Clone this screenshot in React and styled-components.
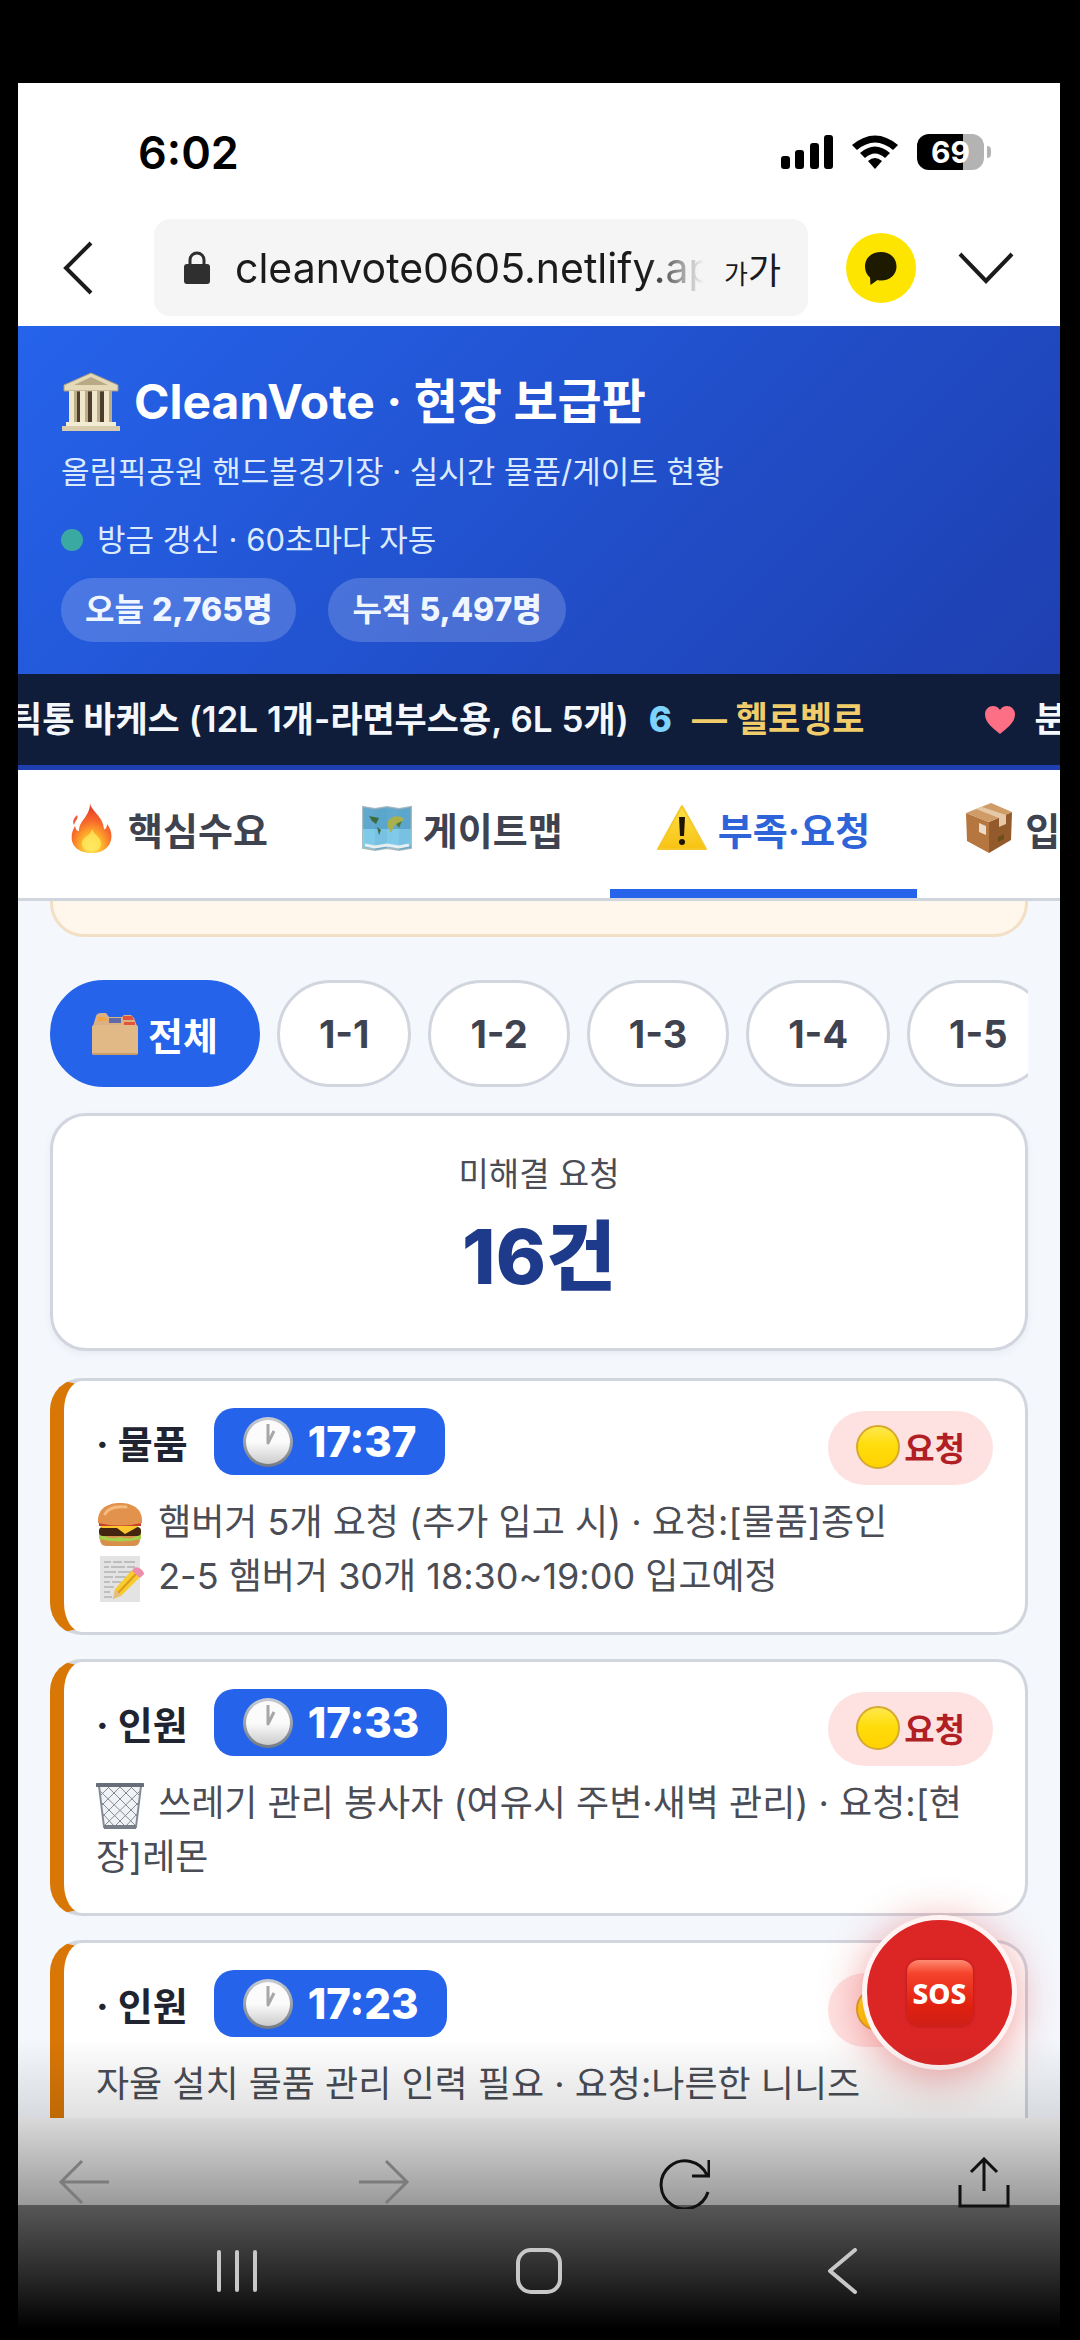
// Imports
import styled, { createGlobalStyle } from "styled-components";

const colors = {
  primary: "#2563eb",
  primaryDark: "#1e3fb0",
  navy: "#0f1d3a",
  border: "#d1d5de",
  text: "#3f4350",
  page: "#f4f7fc",
};

const GlobalStyle = createGlobalStyle`
  * {
    box-sizing: border-box;
  }
  body {
    margin: 0;
    background: #000;
    font-family: "Inter", "Noto Sans CJK KR", sans-serif;
  }
  button {
    display: flex;
    align-items: center;
    justify-content: center;
    flex-shrink: 0;
    margin: 0;
    padding: 0;
    border: none;
    background: none;
    color: inherit;
    font-family: inherit;
    cursor: pointer;
  }
  svg {
    display: block;
    flex-shrink: 0;
  }
`;

const tabs = [
  { label: "핵심수요", icon: <FireIcon /> },
  { label: "게이트맵", icon: <MapIcon /> },
  { label: "부족·요청", icon: <WarningIcon />, active: true },
  { label: "입고", icon: <BoxIcon /> },
];

const gates = ["1-1", "1-2", "1-3", "1-4", "1-5"];

const requests = [
  {
    type: "물품",
    time: "17:37",
    lines: [
      { icon: <BurgerIcon />, text: "햄버거 5개 요청 (추가 입고 시) · 요청:[물품]종인" },
      { icon: <MemoIcon />, text: "2-5 햄버거 30개 18:30~19:00 입고예정" },
    ],
  },
  {
    type: "인원",
    time: "17:33",
    lines: [
      {
        icon: <TrashIcon />,
        text: "쓰레기 관리 봉사자 (여유시 주변·새벽 관리) · 요청:[현장]레몬",
      },
    ],
  },
  {
    type: "인원",
    time: "17:23",
    lines: [{ text: "자율 설치 물품 관리 인력 필요 · 요청:나른한 니니즈" }],
  },
];

export default function App() {
  return (
    <Screen>
      <GlobalStyle />
      <StatusBar />
      <BrowserBar />
      <Header />
      <Ticker />
      <Tabs>
        {tabs.map((tab) => (
          <Tab key={tab.label} $active={tab.active}>
            {tab.icon}
            {tab.label}
          </Tab>
        ))}
      </Tabs>
      <Feed>
        <Notice />
        <Chips>
          <Chip $active>
            <FolderIcon />
            전체
          </Chip>
          {gates.map((gate) => (
            <Chip key={gate}>{gate}</Chip>
          ))}
        </Chips>
        <Summary>
          <SummaryLabel>미해결 요청</SummaryLabel>
          <SummaryCount>16건</SummaryCount>
        </Summary>
        <RequestList>
          {requests.map((request) => (
            <RequestCard key={request.time} request={request} />
          ))}
        </RequestList>
        <SosButton aria-label="SOS">
          <SosTile>SOS</SosTile>
        </SosButton>
      </Feed>
      <BrowserToolbar />
      <Shade />
      <SystemNav />
    </Screen>
  );
}

function StatusBar() {
  return (
    <StatusRow>
      <Clock>6:02</Clock>
      <StatusIcons>
        <svg width="52" height="34" viewBox="0 0 52 34">
          <rect x="0" y="21" width="9" height="13" rx="3" />
          <rect x="14" y="15" width="9" height="19" rx="3" />
          <rect x="29" y="8" width="9" height="26" rx="3" />
          <rect x="43" y="0" width="9" height="34" rx="3" />
        </svg>
        <svg width="46" height="34" viewBox="0 0 46 34">
          <path d="M0 10Q23-9 46 10L41 15Q23 0 5 15Z" />
          <path d="M8 18Q23 5 38 18L33 23Q23 14 13 23Z" />
          <path d="M16 26Q23 20 30 26L23 34Z" />
        </svg>
        <Battery>
          <BatteryBody>69</BatteryBody>
          <BatteryTip />
        </Battery>
      </StatusIcons>
    </StatusRow>
  );
}

function BrowserBar() {
  return (
    <BrowserRow>
      <button aria-label="뒤로">
        <svg width="32" height="54" viewBox="0 0 32 54" fill="none" stroke="#1b1b1b" strokeWidth="4">
          <path d="M29 2L4 27L29 52" />
        </svg>
      </button>
      <AddressBox>
        <svg width="26" height="34" viewBox="0 0 26 34">
          <path d="M6 15V9A7 7 0 0 1 20 9V15" fill="none" stroke="#2f2f2f" strokeWidth="3" />
          <rect y="13" width="26" height="20" rx="3" fill="#2f2f2f" />
        </svg>
        <AddressInput aria-label="주소" readOnly value="cleanvote0605.netlify.app" />
        <FontButton aria-label="글자 크기">
          <small>가</small>가
        </FontButton>
      </AddressBox>
      <TalkButton aria-label="카카오톡">
        <svg width="34" height="34" viewBox="0 0 34 34">
          <path
            d="M17 1C7.500 1 1 7 1 15.500C1 20.500 3 24 6 26.500L6.500 34L13.500 29Q15 29.500 17 29.500C26 29.500 32.500 23.500 32.500 15.500C32.500 7 26 1 17 1Z"
            fill="#1e1a00"
          />
        </svg>
      </TalkButton>
      <button aria-label="닫기">
        <svg width="56" height="34" viewBox="0 0 56 34" fill="none" stroke="#1b1b1b" strokeWidth="4">
          <path d="M2 3L28 30L54 3" />
        </svg>
      </button>
    </BrowserRow>
  );
}

function Header() {
  return (
    <Hero>
      <Title>
        <TempleIcon />
        CleanVote · 현장 보급판
      </Title>
      <Subtitle>올림픽공원 핸드볼경기장 · 실시간 물품/게이트 현황</Subtitle>
      <Updated>방금 갱신 · 60초마다 자동</Updated>
      <Counters>
        <Counter>
          오늘 <b>2,765명</b>
        </Counter>
        <Counter>
          누적 <b>5,497명</b>
        </Counter>
      </Counters>
    </Hero>
  );
}

function Ticker() {
  return (
    <TickerBar>
      <TickerTrack>
        <TickerItem>
          틱통 바케스 (12L 1개-라면부스용, 6L 5개) <TickerCount>6</TickerCount>
          <TickerName>— 헬로벵로</TickerName>
        </TickerItem>
        <TickerItem>
          <svg width="30" height="28" viewBox="0 0 30 28">
            <path
              d="M15 28C9 23 0 17 0 8.500C0 3 4 0 8 0C11 0 13.500 1.500 15 4C16.500 1.500 19 0 22 0C26 0 30 3 30 8.500C30 17 21 23 15 28Z"
              fill="#fd6f85"
            />
          </svg>
          분유
        </TickerItem>
      </TickerTrack>
    </TickerBar>
  );
}

function RequestCard({ request }) {
  return (
    <Card>
      <CardHead>
        <CardTitle>
          · {request.type}
          <TimeBadge>
            <ClockIcon />
            {request.time}
          </TimeBadge>
        </CardTitle>
        <StatusBadge>
          <YellowCircle />
          요청
        </StatusBadge>
      </CardHead>
      {request.lines.map((line) => (
        <CardLine key={line.text}>
          {line.icon}
          {line.icon && " "}
          {line.text}
        </CardLine>
      ))}
    </Card>
  );
}

function BrowserToolbar() {
  return (
    <Toolbar>
      <ToolButton aria-label="이전 페이지" $muted>
        <svg width="52" height="52" viewBox="0 0 52 52">
          <path d="M51 25H3M24 4L3 25L24 46" />
        </svg>
      </ToolButton>
      <ToolButton aria-label="다음 페이지" $muted>
        <svg width="52" height="52" viewBox="0 0 52 52">
          <path d="M1 25H49M28 4L49 25L28 46" />
        </svg>
      </ToolButton>
      <ToolButton aria-label="새로고침">
        <svg width="52" height="52" viewBox="0 0 52 52">
          <path d="M50 35A24 24 0 1 1 49 18M51 3V19H34" />
        </svg>
      </ToolButton>
      <ToolButton aria-label="공유">
        <svg width="52" height="52" viewBox="0 0 52 52">
          <path d="M2 28V49H50V28M26 34V2M13 15L26 2L39 15" />
        </svg>
      </ToolButton>
    </Toolbar>
  );
}

function SystemNav() {
  return (
    <NavBar>
      <NavButton aria-label="최근 앱">
        <svg width="46" height="46" viewBox="0 0 46 46">
          <path d="M5 4V42M23 4V42M41 4V42" />
        </svg>
      </NavButton>
      <NavButton aria-label="홈">
        <svg width="46" height="46" viewBox="0 0 46 46">
          <rect x="2" y="2" width="42" height="42" rx="13" />
        </svg>
      </NavButton>
      <NavButton aria-label="시스템 뒤로">
        <svg width="46" height="46" viewBox="0 0 46 46">
          <path d="M37 2L12 23L37 44" />
        </svg>
      </NavButton>
    </NavBar>
  );
}

/**
 * Emoji drawings
 */
function TempleIcon() {
  return (
    <svg width="60" height="60" viewBox="0 0 60 60">
      <rect x="10" y="18" width="40" height="33" fill="#4c3d2c" />
      <path d="M3 13L30 1L57 13V19H3Z" fill="#e4d9b8" stroke="#a89b7e" strokeWidth="1" />
      <path d="M13 13L30 5L47 13Z" fill="#b9aa85" />
      {[8, 19, 31, 43].map((x) => (
        <g key={x}>
          <rect x={x} y="19" width="8" height="32" fill="#f1e8cc" />
          <rect x={x + 5} y="19" width="3" height="32" fill="#bdae8b" />
        </g>
      ))}
      <rect x="5" y="50" width="50" height="4" fill="#f3ecd5" />
      <rect x="1" y="54" width="58" height="5" fill="#d8ccad" />
    </svg>
  );
}

function FireIcon() {
  return (
    <svg width="50" height="50" viewBox="0 0 50 50">
      <defs>
        <radialGradient id="fire" cx="50%" cy="88%" r="75%">
          <stop offset="0" stopColor="#fff26b" />
          <stop offset="0.350" stopColor="#fdb52a" />
          <stop offset="0.700" stopColor="#f8692b" />
          <stop offset="1" stopColor="#e8442a" />
        </radialGradient>
      </defs>
      <path
        d="M23 0C24 8 36 13 37 26C38 27 40 25 40 21C47 29 46 43 35 48C29 51 18 51 12 47C3 42 3 31 8 23C9 27 10 28 12 28C12 17 23 14 23 0Z"
        fill="url(#fire)"
      />
      <path d="M10 12C12 15 8 18 7 22C5 18 7 15 10 12Z" fill="#ef5a32" />
      <path d="M25 26C27 32 34 34 34 41C34 46 29 48 24 48C18 48 14 44 15 39C16 34 24 33 25 26Z" fill="#ffe75c" opacity="0.8" />
    </svg>
  );
}

function MapIcon() {
  return (
    <svg width="50" height="50" viewBox="0 0 50 50">
      <path d="M1 4L13 6L25 4L37 6L49 4V45L37 47L25 45L13 47L1 45Z" fill="#6db9dd" stroke="#a9bcc0" strokeWidth="2" />
      <path d="M1 4L13 6V26H1ZM25 4L37 6V26H25Z" fill="#5a9dc4" opacity="0.6" />
      <path d="M13 6L25 4V45L13 47ZM37 6L49 4V45L37 47Z" fill="#4a94bd" opacity="0.5" />
      <path d="M1 26H49V43L37 45L25 43L13 45L1 43Z" fill="#8cd4f1" opacity="0.6" />
      <path d="M7 13L17 15L14 21L10 18ZM15 24L19 27L17 32Z" fill="#3d6b3f" />
      <path d="M26 18C30 12 38 12 42 16C40 20 36 20 32 23L29 30L26 24Z" fill="#a9b04d" />
      <path d="M34 21L40 18L37 25Z" fill="#4f7a3f" />
      <path d="M3 42L13 44L25 42L37 44L47 42" fill="none" stroke="#e6eef0" strokeWidth="3" />
    </svg>
  );
}

function WarningIcon() {
  return (
    <svg width="50" height="50" viewBox="0 0 50 50">
      <defs>
        <linearGradient id="warning" x1="0" y1="0" x2="0" y2="1">
          <stop offset="0" stopColor="#fde047" />
          <stop offset="1" stopColor="#f7c313" />
        </linearGradient>
      </defs>
      <path d="M25 3L49 46H1Z" fill="url(#warning)" stroke="#f5c92c" strokeWidth="2" strokeLinejoin="round" />
      <path d="M22 14H28L27 33H23Z" fill="#1c1600" />
      <circle cx="25" cy="39" r="3" fill="#1c1600" />
    </svg>
  );
}

function BoxIcon() {
  return (
    <svg width="50" height="50" viewBox="0 0 50 50">
      <path d="M2 10L25 19V50L3 38Z" fill="#b5763f" />
      <path d="M48 9L25 19V50L47 37Z" fill="#935a2c" />
      <path d="M2 10L27 0L48 9L25 19Z" fill="#cf9b67" />
      <path d="M12 6L18 4L42 12V21L35 24V15Z" fill="#e5c9a6" />
      <path d="M15 20L22 23V32L15 29Z" fill="#eadccb" />
      <path d="M34 34L40 31V36L34 39Z" fill="#6d4f1a" />
    </svg>
  );
}

function FolderIcon() {
  return (
    <svg width="46" height="44" viewBox="0 0 46 44">
      <path d="M4 4Q5 1 9 1H14L17 5H30L32 3H39L42 6L45 14H1Z" fill="#d9b184" />
      <path d="M6 5H13L16 9H6Z" fill="#f1a545" />
      <path d="M17 6H29V11H17Z" fill="#5f6aa8" />
      <path d="M31 4H40L42 8H31ZM32 10H43V14H32Z" fill="#e2553b" />
      <rect x="0" y="13" width="46" height="30" rx="2" fill="#e1b987" />
      <path d="M1 42H45" stroke="#c99d68" strokeWidth="2" />
    </svg>
  );
}

function ClockIcon() {
  return (
    <svg width="52" height="52" viewBox="0 0 52 52">
      <defs>
        <linearGradient id="clockRim" x1="0" y1="0" x2="0" y2="1">
          <stop offset="0" stopColor="#c6ccd2" />
          <stop offset="1" stopColor="#747a82" />
        </linearGradient>
        <linearGradient id="clockFace" x1="0" y1="0" x2="0" y2="1">
          <stop offset="0.500" stopColor="#fbfbfb" />
          <stop offset="1" stopColor="#cccccc" />
        </linearGradient>
      </defs>
      <circle cx="26" cy="26" r="25" fill="url(#clockRim)" />
      <circle cx="26" cy="26" r="22" fill="url(#clockFace)" />
      <path d="M26 8V27L32 15" fill="none" stroke="#a7a7a7" strokeWidth="3" strokeLinejoin="round" />
    </svg>
  );
}

function YellowCircle() {
  return (
    <svg width="44" height="44" viewBox="0 0 44 44">
      <defs>
        <linearGradient id="yellow" x1="0" y1="0" x2="0" y2="1">
          <stop offset="0" stopColor="#ffe94f" />
          <stop offset="0.450" stopColor="#ffdd0c" />
          <stop offset="1" stopColor="#ffd200" />
        </linearGradient>
      </defs>
      <circle cx="22" cy="22" r="21" fill="url(#yellow)" stroke="#d6a92f" strokeWidth="2" />
    </svg>
  );
}

function BurgerIcon() {
  return (
    <svg width="48" height="48" viewBox="0 0 48 48">
      <rect x="4" y="33" width="40" height="12" rx="6" fill="#d98f4c" />
      <path d="M3 32Q12 39 24 36Q37 40 45 32V38Q24 43 3 38Z" fill="#a6cf4b" />
      <rect x="3" y="26" width="42" height="9" rx="4" fill="#43240f" />
      <path d="M3 24H45L38 28L29 33L21 27L6 27Z" fill="#fdc62e" />
      <path d="M3 22H45V25H3Z" fill="#c8402a" />
      <path d="M2 22C1 8 11 2 24 2C37 2 47 8 46 22Q24 27 2 22Z" fill="#e2924d" />
      <path d="M9 13C13 6 22 5 30 6" fill="none" stroke="#f5bb7d" strokeWidth="3" strokeLinecap="round" />
    </svg>
  );
}

function MemoIcon() {
  return (
    <svg width="48" height="48" viewBox="0 0 48 48">
      <rect x="4" y="1" width="40" height="46" fill="#e3e3e3" />
      <path
        d="M8 7H15M17 7H26M28 7H39M8 12H13M15 12H29M31 12H39M8 17H20M22 17H36M8 22H17M19 22H30M8 27H14M16 27H25M8 32H18M8 37H14M8 42H16"
        stroke="#999"
        strokeWidth="1"
      />
      <path d="M36 15L44 22L25 41L17 44L19 34Z" fill="#f8cb2f" />
      <path d="M40 19L22 38" stroke="#dc9b18" strokeWidth="2" />
      <path d="M19 35L25 40L17 44Z" fill="#e2bd88" />
      <path d="M38 13Q42 11 46 15T46 21L44 23L36 16Z" fill="#ec8fae" />
    </svg>
  );
}

function TrashIcon() {
  return (
    <svg width="48" height="48" viewBox="0 0 48 48" fill="none" stroke="#858b95">
      <path d="M3 4L8 45H40L45 4Z" fill="#f0f2f5" strokeWidth="2" />
      <path
        d="M4 14L14 4M5 24L25 4M7 34L36 5M9 43L44 9M18 45L43 20M29 45L41 32M44 14L34 4M43 24L23 4M41 34L12 5M39 43L4 9M30 45L5 20M19 45L7 32"
        strokeWidth="1"
      />
      <path d="M1 3H47" stroke="#686e79" strokeWidth="4" strokeLinecap="round" />
      <path d="M8 45H40" stroke="#787e88" strokeWidth="4" />
    </svg>
  );
}

/**
 * Page and browser style
 */
const Screen = styled.main`
  position: relative;
  display: flex;
  flex-direction: column;
  height: 100vh;
  padding: 83px 20px 0 18px;
  overflow: hidden;
  background: #000;
`;

const StatusRow = styled.div`
  display: flex;
  flex-shrink: 0;
  align-items: center;
  justify-content: space-between;
  height: 136px;
  padding: 2px 69px 0 120px;
  background: #fff;
`;

const Clock = styled.time`
  font-size: 45px;
  font-weight: 600;
`;

const StatusIcons = styled.div`
  display: flex;
  align-items: center;
  gap: 19px;
`;

const Battery = styled.div`
  display: flex;
  align-items: center;
  gap: 3px;
`;

const BatteryBody = styled.div`
  width: 67px;
  border-radius: 12px;
  background: linear-gradient(90deg, #000 69%, #b3b3b3 69%);
  color: #fff;
  font-size: 30px;
  font-weight: 700;
  line-height: 36px;
  text-align: center;
`;

const BatteryTip = styled.div`
  width: 4px;
  height: 12px;
  border-radius: 0 4px 4px 0;
  background: #b3b3b3;
`;

const BrowserRow = styled.div`
  display: flex;
  flex-shrink: 0;
  align-items: center;
  padding: 0 46px 10px 44px;
  background: #fff;

  & > button:last-child {
    margin-left: 42px;
  }
`;

const AddressBox = styled.div`
  display: flex;
  flex: 1;
  align-items: center;
  min-width: 0;
  height: 97px;
  margin: 0 38px 0 60px;
  padding: 0 27px 0 30px;
  border-radius: 16px;
  background: #f5f5f5;
`;

const AddressInput = styled.input`
  flex: 1;
  min-width: 0;
  margin: 0 20px 0 25px;
  padding: 0;
  border: none;
  outline: none;
  background: none;
  color: #1b1b1b;
  font-family: inherit;
  font-size: 41px;
  mask-image: linear-gradient(90deg, #000 88%, transparent);
`;

const FontButton = styled.button`
  && {
    align-items: baseline;
    color: #1b1b1b;
    font-size: 36px;
  }

  small {
    font-size: 26px;
  }
`;

const TalkButton = styled.button`
  && {
    width: 70px;
    height: 70px;
    border-radius: 50%;
    background: #fee500;
  }
`;

/**
 * Header style
 */
const Hero = styled.header`
  flex-shrink: 0;
  height: 348px;
  padding: 44px 43px 0;
  background: linear-gradient(135deg, ${colors.primary}, ${colors.primaryDark});
  color: #dbeafe;
`;

const Title = styled.h1`
  display: flex;
  align-items: center;
  gap: 13px;
  margin: 0;
  color: #fff;
  font-size: 48px;
  font-weight: 700;
  line-height: 64px;
`;

const Subtitle = styled.p`
  margin: 16px 0 0;
  font-size: 31px;
  line-height: 44px;
`;

const Updated = styled.p`
  display: flex;
  align-items: center;
  gap: 14px;
  margin: 24px 0 0;
  font-size: 31px;
  line-height: 44px;

  &::before {
    content: "";
    width: 22px;
    height: 22px;
    border-radius: 50%;
    background: #3aa9a2;
  }
`;

const Counters = styled.div`
  display: flex;
  gap: 32px;
  margin-top: 16px;
`;

const Counter = styled.span`
  padding: 0 24px;
  border-radius: 32px;
  background: rgba(255, 255, 255, 0.18);
  color: #f0f6ff;
  font-size: 32px;
  font-weight: 600;
  line-height: 64px;

  b {
    font-weight: 800;
  }
`;

const TickerBar = styled.div`
  flex-shrink: 0;
  overflow: hidden;
  border-bottom: 5px solid ${colors.primaryDark};
  background: ${colors.navy};
  color: #f4f7fc;
  font-size: 35px;
  font-weight: 600;
  line-height: 91px;
  white-space: nowrap;
`;

const TickerTrack = styled.div`
  display: flex;
  gap: 120px;
  margin-left: -8px;
`;

const TickerItem = styled.span`
  display: flex;
  flex-shrink: 0;
  align-items: center;
  gap: 20px;
`;

const TickerCount = styled.b`
  color: #7dd3fc;
  font-weight: 800;
`;

const TickerName = styled.span`
  color: #f0cd6a;
`;

const Tabs = styled.nav`
  display: flex;
  flex-shrink: 0;
  overflow: hidden;
  padding-left: 2px;
  border-bottom: 3px solid ${colors.border};
  background: #fff;
`;

const Tab = styled.button`
  && {
    gap: 11px;
    height: 128px;
    padding: 0 47px 3px;
    border-bottom: 9px solid ${(props) => (props.$active ? colors.primary : "transparent")};
    color: ${(props) => (props.$active ? "#2f64d8" : colors.text)};
    font-size: 38px;
    font-weight: 700;
    white-space: nowrap;
  }
`;

/**
 * Feed style
 */
const Feed = styled.section`
  position: relative;
  flex: 1;
  min-height: 0;
  overflow: hidden;
  padding: 0 32px;
  background: ${colors.page};
`;

const Notice = styled.div`
  height: 36px;
  border: 3px solid #f2dfc4;
  border-top: none;
  border-radius: 0 0 34px 34px;
  background: #fff6ec;
`;

const Chips = styled.div`
  display: flex;
  gap: 17px;
  margin-top: 43px;
  overflow: hidden;
`;

const Chip = styled.button`
  && {
    gap: 10px;
    height: 107px;
    padding: 0 39px;
    border: 3px solid ${(props) => (props.$active ? colors.primary : colors.border)};
    border-radius: 54px;
    background: ${(props) => (props.$active ? colors.primary : "#fff")};
    color: ${(props) => (props.$active ? "#fff" : colors.text)};
    font-size: 38px;
    font-weight: 700;
  }
`;

const Summary = styled.div`
  margin: 26px 0 27px;
  padding: 36px 0 44px;
  border: 3px solid ${colors.border};
  border-radius: 36px;
  background: #fff;
  box-shadow: 0 3px 8px rgba(15, 29, 58, 0.05);
  text-align: center;
`;

const SummaryLabel = styled.div`
  color: #4a4d55;
  font-size: 33px;
  line-height: 44px;
`;

const SummaryCount = styled.div`
  margin-top: 12px;
  color: #1e3a8a;
  font-size: 76px;
  font-weight: 800;
  line-height: 96px;
`;

const RequestList = styled.ul`
  display: flex;
  flex-direction: column;
  gap: 24px;
  margin: 0;
  padding: 0;
  list-style: none;
`;

const Card = styled.li`
  min-height: 257px;
  padding: 27px 32px;
  border: 3px solid ${colors.border};
  border-left: 14px solid #d97706;
  border-radius: 32px;
  background: #fff;
`;

const CardHead = styled.div`
  display: flex;
  align-items: flex-end;
  justify-content: space-between;
  height: 77px;
  margin-bottom: 10px;
`;

const CardTitle = styled.h2`
  display: flex;
  align-items: center;
  align-self: flex-start;
  gap: 26px;
  margin: 0;
  color: #1f2430;
  font-size: 38px;
  font-weight: 700;
`;

const TimeBadge = styled.time`
  display: flex;
  align-items: center;
  gap: 14px;
  height: 67px;
  padding: 0 28px;
  border-radius: 20px;
  background: ${colors.primary};
  color: #fff;
  font-size: 42px;
  font-weight: 800;
`;

const StatusBadge = styled.span`
  display: flex;
  align-items: center;
  gap: 4px;
  height: 74px;
  padding: 0 28px 3px;
  border-radius: 37px;
  background: #fee2e2;
  color: #b01f24;
  font-size: 33px;
  font-weight: 700;
`;

const CardLine = styled.p`
  margin: 0;
  color: #4a4d55;
  font-size: 36px;
  line-height: 54px;

  svg {
    display: inline-block;
    margin-right: 4px;
    vertical-align: middle;
  }
`;

const SosButton = styled.button`
  && {
    position: absolute;
    right: 43px;
    bottom: 48px;
    width: 155px;
    height: 155px;
    border: 5px solid #fff3f3;
    border-radius: 50%;
    background: #dc2626;
    box-shadow: 0 8px 44px rgba(220, 38, 38, 0.45);
  }
`;

const SosTile = styled.span`
  width: 66px;
  border-radius: 12px;
  background: linear-gradient(#ff8a72, #f5432c 20%, #e0200f 70%, #cf2018);
  box-shadow: 0 0 3px #a81515;
  color: #fff;
  font-family: "Noto Sans", sans-serif;
  font-size: 28px;
  font-weight: 800;
  line-height: 66px;
  text-align: center;
`;

/**
 * Bottom bars style
 */
const Toolbar = styled.div`
  z-index: 2;
  display: flex;
  flex-shrink: 0;
  justify-content: space-between;
  height: 87px;
  padding: 39px 50px 0 40px;
  background: linear-gradient(#d9d9d9, #9a9a9a);
`;

const ToolButton = styled.button`
  && {
    height: 52px;
  }

  svg {
    fill: none;
    stroke: ${(props) => (props.$muted ? "#7c7c7c" : "#111")};
    stroke-width: 3;
  }
`;

const Shade = styled.div`
  position: absolute;
  right: 20px;
  bottom: 222px;
  left: 18px;
  height: 80px;
  background: linear-gradient(transparent, rgba(0, 0, 0, 0.12));
  pointer-events: none;
`;

const NavBar = styled.nav`
  display: grid;
  flex-shrink: 0;
  grid-template-columns: repeat(3, 1fr);
  height: 135px;
  padding: 0 68px 4px;
  background: linear-gradient(#575757, #2b2b2b 50%, #000 92%);
`;

const NavButton = styled.button`
  svg {
    fill: none;
    stroke: #c8c8c8;
    stroke-width: 4;
    stroke-linecap: round;
    stroke-linejoin: round;
  }
`;
